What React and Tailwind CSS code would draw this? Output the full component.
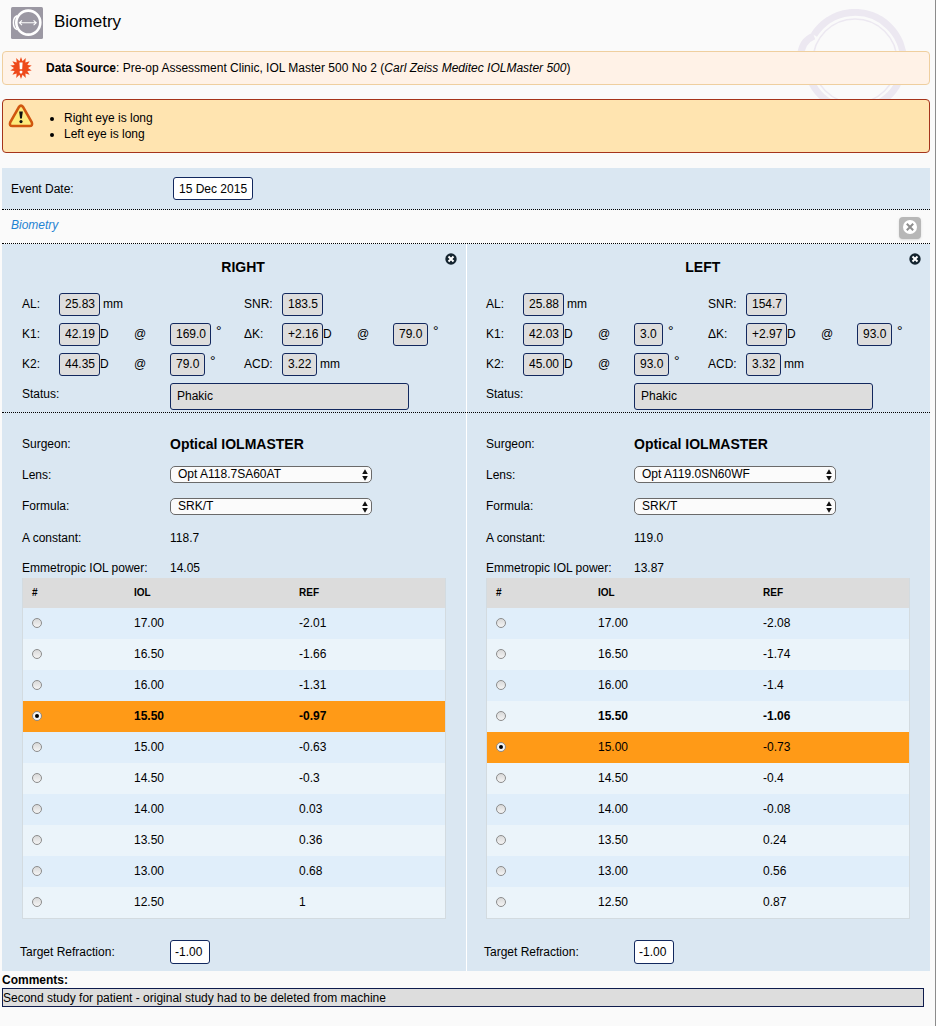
import React, { useState } from 'react';

const EYES = [
  {
    id: 'right',
    title: 'RIGHT',
    al: '25.83',
    snr: '183.5',
    k1: '42.19',
    k1Axis: '169.0',
    dk: '+2.16',
    dkAxis: '79.0',
    k2: '44.35',
    k2Axis: '79.0',
    acd: '3.22',
    lens: 'Opt A118.7SA60AT',
    aConstant: '118.7',
    emmetropic: '14.05',
    selected: 3,
    closest: 3,
    rows: [
      ['17.00', '-2.01'],
      ['16.50', '-1.66'],
      ['16.00', '-1.31'],
      ['15.50', '-0.97'],
      ['15.00', '-0.63'],
      ['14.50', '-0.3'],
      ['14.00', '0.03'],
      ['13.50', '0.36'],
      ['13.00', '0.68'],
      ['12.50', '1'],
    ],
  },
  {
    id: 'left',
    title: 'LEFT',
    al: '25.88',
    snr: '154.7',
    k1: '42.03',
    k1Axis: '3.0',
    dk: '+2.97',
    dkAxis: '93.0',
    k2: '45.00',
    k2Axis: '93.0',
    acd: '3.32',
    lens: 'Opt A119.0SN60WF',
    aConstant: '119.0',
    emmetropic: '13.87',
    selected: 4,
    closest: 3,
    rows: [
      ['17.00', '-2.08'],
      ['16.50', '-1.74'],
      ['16.00', '-1.4'],
      ['15.50', '-1.06'],
      ['15.00', '-0.73'],
      ['14.50', '-0.4'],
      ['14.00', '-0.08'],
      ['13.50', '0.24'],
      ['13.00', '0.56'],
      ['12.50', '0.87'],
    ],
  },
];

const VALUE_WIDTHS = { 3: 'w-[29px]', 4: 'w-[35px]', 5: 'w-[41px]' };

function Value({ id, value, unit, label }) {
  const gap = unit === '°' ? 'gap-[5px]' : unit === 'mm' ? 'gap-[3px]' : '';
  return (
    <div className={`flex items-center ${gap}`}>
      <input
        id={id}
        aria-label={label}
        readOnly
        value={value}
        className={`h-[23px] shrink-0 rounded-[3px] border border-[#12285e] bg-[#dddddd] pl-[5px] ${VALUE_WIDTHS[value.length]}`}
      />
      {unit === '°' ? (
        <span className="self-start text-[14px] leading-4">°</span>
      ) : (
        <span>{unit}</span>
      )}
    </div>
  );
}

function RoundClose() {
  return (
    <svg viewBox="0 0 12 12" className="block size-3" aria-hidden="true">
      <circle cx="6" cy="6" r="5.7" fill="#14242f" />
      <path d="M3.5 3.5 8.5 8.5M8.5 3.5 3.5 8.5" stroke="#fff" strokeWidth="2" />
    </svg>
  );
}

function Measurements({ eye }) {
  const id = (name) => `${eye.id}-${name}`;
  return (
    <div className="border-b border-dotted border-black pt-2 pb-[2px]">
      <div className="relative flex h-[37px] pt-[7px] pl-[47%]">
        <h2 className="text-[14px] leading-4 font-bold">{eye.title}</h2>
        <button
          type="button"
          aria-label={`Remove ${eye.title.toLowerCase()} eye`}
          className="absolute top-px right-[-11px]"
        >
          <RoundClose />
        </button>
      </div>
      <div className="grid auto-rows-[30px] grid-cols-[37fr_75fr_36fr_74fr_38fr_75fr_36fr_53fr] items-center">
        <label htmlFor={id('al')}>AL:</label>
        <Value id={id('al')} value={eye.al} unit="mm" />
        <label htmlFor={id('snr')} className="col-start-5">SNR:</label>
        <Value id={id('snr')} value={eye.snr} />

        <label htmlFor={id('k1')} className="col-start-1">K1:</label>
        <Value id={id('k1')} value={eye.k1} unit="D" />
        <span>@</span>
        <Value id={id('k1-axis')} label="K1 axis" value={eye.k1Axis} unit="°" />
        <label htmlFor={id('dk')}>ΔK:</label>
        <Value id={id('dk')} value={eye.dk} unit="D" />
        <span>@</span>
        <Value id={id('dk-axis')} label="ΔK axis" value={eye.dkAxis} unit="°" />

        <label htmlFor={id('k2')}>K2:</label>
        <Value id={id('k2')} value={eye.k2} unit="D" />
        <span>@</span>
        <Value id={id('k2-axis')} label="K2 axis" value={eye.k2Axis} unit="°" />
        <label htmlFor={id('acd')}>ACD:</label>
        <Value id={id('acd')} value={eye.acd} unit="mm" />
      </div>
      <div className="flex items-start pt-1">
        <label htmlFor={id('status')} className="w-[148px] shrink-0 leading-[22px]">
          Status:
        </label>
        <input
          id={id('status')}
          readOnly
          value="Phakic"
          className="h-[27px] w-[239px] min-w-0 rounded-[3px] border border-[#12285e] bg-[#dddddd] pb-[2px] pl-[6px]"
        />
      </div>
    </div>
  );
}

function Picker({ id, options }) {
  return (
    <div className="relative w-[202px]">
      <select
        id={id}
        className="block h-[17px] w-full appearance-none rounded-[5px] border border-[#6a6a6a] bg-[#fbfbfb] pl-[7px] leading-[15px]"
      >
        {options.map((o) => (
          <option key={o}>{o}</option>
        ))}
      </select>
      <svg
        viewBox="0 0 6 12"
        className="pointer-events-none absolute top-[3px] right-1 h-3 w-[6px]"
        aria-hidden="true"
      >
        <path d="M3 0.2 5.8 5H0.2ZM3 11.8 5.8 7H0.2Z" fill="#111" />
      </svg>
    </div>
  );
}

function Row({ label, htmlFor, height, children }) {
  const Tag = htmlFor ? 'label' : 'span';
  return (
    <div className={`flex items-center ${height}`}>
      <Tag htmlFor={htmlFor} className="w-[148px] shrink-0">
        {label}
      </Tag>
      {children}
    </div>
  );
}

function Calculation({ eye }) {
  const [selected, setSelected] = useState(eye.selected);
  return (
    <div className="pt-4">
      <Row label="Surgeon:" height="h-[30px]">
        <span className="text-[14px] font-bold">Optical IOLMASTER</span>
      </Row>
      <Row label="Lens:" htmlFor={`${eye.id}-lens`} height="h-[31px]">
        <Picker id={`${eye.id}-lens`} options={[eye.lens]} />
      </Row>
      <Row label="Formula:" htmlFor={`${eye.id}-formula`} height="h-8">
        <Picker id={`${eye.id}-formula`} options={['SRK/T']} />
      </Row>
      <Row label="A constant:" height="h-8">
        <span>{eye.aConstant}</span>
      </Row>
      <Row label="Emmetropic IOL power:" height="h-7">
        <span>{eye.emmetropic}</span>
      </Row>
      <table className="-mt-1 w-full table-fixed border-separate border-spacing-0 border border-t-0 border-[#d3dbe0] text-left">
        <thead>
          <tr className="h-[30px] bg-[#dcdcdc] text-[10px]">
            <th className="w-[102px] px-[9px] font-bold">#</th>
            <th className="w-[165px] px-[9px] font-bold">IOL</th>
            <th className="px-[9px] font-bold">REF</th>
          </tr>
        </thead>
        <tbody>
          {eye.rows.map(([iol, ref], i) => {
            const active = i === selected;
            const shade = active
              ? 'bg-[#ff9a17]'
              : i % 2
                ? 'bg-[#ebf4fa]'
                : 'bg-[#e0eefa]';
            return (
              <tr
                key={iol}
                className={`h-[31px] ${shade} ${i === eye.closest ? 'font-bold' : ''}`}
              >
                <td className="px-[9px] pb-[2px]">
                  <input
                    type="radio"
                    name={`${eye.id}-iol`}
                    aria-label={`IOL ${iol}`}
                    checked={active}
                    onChange={() => setSelected(i)}
                    className="grid size-[10px] appearance-none place-content-center rounded-full border border-[#8c8c8c] bg-linear-to-b from-[#d9d9d9] to-[#f4f4f4] checked:from-[#f4f4f4] checked:before:size-1 checked:before:rounded-full checked:before:bg-black"
                  />
                </td>
                <td className="px-[9px] pb-[2px]">{iol}</td>
                <td className="px-[9px] pb-[2px]">{ref}</td>
              </tr>
            );
          })}
        </tbody>
      </table>
      <div className="-ml-[2px] flex h-[52px] items-end pb-[7px]">
        <label htmlFor={`${eye.id}-target`} className="w-[150px] shrink-0 leading-6">
          Target Refraction:
        </label>
        <input
          id={`${eye.id}-target`}
          defaultValue="-1.00"
          className="h-6 w-10 rounded-[3px] border border-[#12285e] bg-white pl-1"
        />
      </div>
    </div>
  );
}

function EventIcon() {
  return (
    <svg viewBox="0 0 32 32" className="size-8 shrink-0" aria-hidden="true">
      <rect width="32" height="32" rx="1.5" fill="#9b98a3" />
      <circle cx="17.3" cy="15.6" r="12" fill="none" stroke="#fff" strokeWidth="2.6" />
      <path d="M6.2 8.8C1.2 10.5 1.2 20.7 6.2 22.6" fill="none" stroke="#fff" strokeWidth="1.5" />
      <path
        d="M8.5 15.8H25M11 13.4 8.4 15.8 11 18.2M22.6 13.4 25.2 15.8 22.6 18.2"
        fill="none"
        stroke="#fff"
        strokeWidth="1.1"
      />
    </svg>
  );
}

function BurstIcon() {
  const points = Array.from({ length: 28 }, (_, i) => {
    const r = i % 2 ? 7 : 11;
    const a = (i * Math.PI) / 14;
    return `${(11 + r * Math.sin(a)).toFixed(2)},${(11 - r * Math.cos(a)).toFixed(2)}`;
  }).join(' ');
  return (
    <svg viewBox="0 0 22 22" className="size-[22px] shrink-0" aria-hidden="true">
      <polygon points={points} fill="#ee4a1b" />
      <path d="M9.4 5.5h3.2l-.4 6.8h-2.4Z" fill="#fff" />
      <rect x="9.7" y="13.8" width="2.6" height="2.6" rx="0.8" fill="#fff" />
    </svg>
  );
}

function WarningIcon() {
  return (
    <svg viewBox="0 0 26 24" className="h-6 w-[26px] shrink-0" aria-hidden="true">
      <path
        d="M11 2.8Q13 0.4 15 2.8L23.8 18.4Q25 22 21.6 22H4.4Q1 22 2.2 18.4Z"
        fill="#fdea7c"
        stroke="#d0560f"
        strokeWidth="2.6"
        strokeLinejoin="round"
      />
      <path d="M11.2 7.5h3.6l-.9 7h-1.8Z" fill="#111" />
      <circle cx="13" cy="17.6" r="1.6" fill="#111" />
    </svg>
  );
}

function Watermark() {
  return (
    <svg
      viewBox="0 0 112 106"
      className="pointer-events-none absolute top-[9px] right-[28px] h-[106px] w-28"
      aria-hidden="true"
    >
      <g fill="none" stroke="#ece8f1">
        <path
          d="M19 26A48.5 48.5 0 1 1 15 70C8 66 5.5 58 5.5 48C6 37 11 30 19 27"
          strokeWidth="7"
        />
        <circle cx="60" cy="52" r="42" strokeWidth="1.5" />
      </g>
    </svg>
  );
}

export default function App() {
  return (
    <div className="relative min-h-screen border-r border-[#8c8c8c] bg-[#fafafa] pr-[5px] pl-[2px] font-['Liberation_Sans',Arial,sans-serif] text-[12px] leading-4 text-black">
      <Watermark />
      <header className="flex h-[51px] items-start gap-[11px] pt-[7px] pl-[9px]">
        <EventIcon />
        <h1 className="text-[17px] leading-[30px]">Biometry</h1>
      </header>

      <section className="relative flex h-[34px] items-center gap-[14px] rounded-[4px] border border-[#efcf9f] bg-[#fff2e7] pl-[7px]">
        <BurstIcon />
        <p>
          <strong>Data Source</strong>: Pre-op Assessment Clinic, IOL Master 500 No 2 (
          <em>Carl Zeiss Meditec IOLMaster 500</em>)
        </p>
      </section>

      <section className="relative mt-[14px] flex min-h-[54px] items-start gap-[13px] rounded-[4px] border border-[#a5341b] bg-[#ffe4b0] pt-1 pl-[5px]">
        <WarningIcon />
        <ul className="list-disc pt-[6px] pl-[17px]">
          <li>Right eye is long</li>
          <li>Left eye is long</li>
        </ul>
      </section>

      <section className="mt-[15px] flex h-[42px] items-center border-b border-dotted border-black bg-[#dae7f2] pl-[9px]">
        <label htmlFor="event-date" className="w-[162px]">
          Event Date:
        </label>
        <input
          id="event-date"
          defaultValue="15 Dec 2015"
          className="h-[23px] w-20 rounded-[3px] border border-[#12285e] bg-white pl-[5px]"
        />
      </section>

      <section className="flex h-[34px] items-start justify-between border-b border-dotted border-black pt-[7px] pr-[9px] pl-[9px]">
        <a href="#biometry" className="text-[#1f83d2] italic">
          Biometry
        </a>
        <button
          type="button"
          aria-label="Remove Biometry"
          className="grid size-[22px] justify-center rounded-[4px] bg-[#b7b7b7] pt-[3px] shadow-sm"
        >
          <svg viewBox="0 0 14 14" className="size-[14px]" aria-hidden="true">
            <circle cx="7" cy="7" r="7" fill="#fff" />
            <path d="M3.8 3.8 10.2 10.2M10.2 3.8 3.8 10.2" stroke="#8e8e8e" strokeWidth="2" />
          </svg>
        </button>
      </section>

      <main id="biometry" className="grid grid-cols-2 bg-[#dae7f2]">
        {EYES.map((eye, i) => (
          <section
            key={eye.id}
            aria-label={`${eye.title} eye`}
            className={i ? 'border-l border-white' : ''}
          >
            <div className={i ? '[&>div]:pr-5 [&>div]:pl-[19px]' : '[&>div]:px-5'}>
              <Measurements eye={eye} />
              <Calculation eye={eye} />
            </div>
          </section>
        ))}
      </main>

      <section>
        <label htmlFor="comments" className="block pt-px font-bold">
          Comments:
        </label>
        <div className="pr-[6px]">
          <input
            id="comments"
            readOnly
            value="Second study for patient - original study had to be deleted from machine"
            className="block h-[19px] w-full border border-[#0f1c4d] bg-[#dddddd]"
          />
        </div>
      </section>
    </div>
  );
}
